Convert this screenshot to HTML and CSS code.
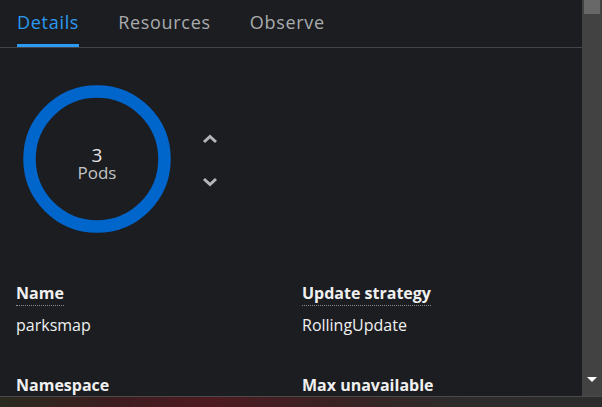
FILE: index.html
```html
<!DOCTYPE html>
<html>
<head>
<meta charset="utf-8">
<link rel="stylesheet" href="styles.css">
</head>
<body>
<div class="window">
  <div class="panel">
    <nav class="tabs">
      <div class="tab active">Details</div>
      <div class="tab">Resources</div>
      <div class="tab">Observe</div>
    </nav>
    <div class="pods">
      <div class="donut">
        <svg width="148" height="148" viewBox="0 0 148 148">
          <circle cx="74" cy="74" r="67.5" fill="none" stroke="#0066cc" stroke-width="12.5"/>
        </svg>
        <div class="donut-label">
          <span class="count">3</span>
          <span class="unit">Pods</span>
        </div>
      </div>
      <div class="scale">
        <svg width="16" height="12" viewBox="0 0 16 12"><path d="M2 9 L8 3.5 L14 9" fill="none" stroke="#b5b6b8" stroke-width="3"/></svg>
        <svg width="16" height="12" viewBox="0 0 16 12"><path d="M2 3 L8 8.5 L14 3" fill="none" stroke="#b5b6b8" stroke-width="3"/></svg>
      </div>
    </div>
    <dl class="details">
      <div class="item">
        <dt><span class="dotted">Name</span></dt>
        <dd>parksmap</dd>
      </div>
      <div class="item">
        <dt><span class="dotted">Update strategy</span></dt>
        <dd>RollingUpdate</dd>
      </div>
      <div class="item">
        <dt>Namespace</dt>
        <dd></dd>
      </div>
      <div class="item">
        <dt>Max unavailable</dt>
        <dd></dd>
      </div>
    </dl>
  </div>
  <div class="scrollbar">
    <div class="thumb"></div>
    <div class="arrow"></div>
  </div>
</div>
<div class="taskbar"></div>
</body>
</html>
```
FILE: styles.css
```css
html, body {
  margin: 0;
  padding: 0;
  width: 602px;
  height: 407px;
  overflow: hidden;
  background: #1b1d21;
  font-family: "Open Sans", "Noto Sans", sans-serif;
}
.window {
  display: flex;
  height: 396px;
}
.panel {
  width: 582px;
  overflow: hidden;
  background: #1b1d21;
}
.tabs {
  display: flex;
  gap: 39px;
  padding-left: 17px;
  height: 47px;
  border-bottom: 1px solid #444548;
  box-sizing: content-box;
}
.tab {
  font-size: 18px;
  letter-spacing: 0.7px;
  color: #a9abad;
  line-height: 20px;
  padding-top: 12px;
  box-sizing: border-box;
  height: 47px;
  border-bottom: 3px solid transparent;
}
.tab.active {
  color: #2b9af3;
  border-bottom-color: #2b9af3;
}
.pods {
  display: flex;
  align-items: center;
  padding: 37px 0 0 23px;
  height: 148px;
}
.donut {
  position: relative;
  width: 148px;
  height: 148px;
}
.donut svg { display: block; }
.donut-label {
  position: absolute;
  inset: 0;
  display: flex;
  flex-direction: column;
  align-items: center;
  justify-content: center;
  padding-top: 9px;
  box-sizing: border-box;
}
.count {
  font-size: 19px;
  line-height: 18px;
  color: #e6e6e6;
}
.unit {
  font-size: 17px;
  line-height: 18px;
  color: #c4c4c4;
}
.scale {
  display: flex;
  flex-direction: column;
  gap: 31px;
  margin-left: 31px;
  margin-top: 2px;
}
.scale svg { display: block; }
.details {
  display: grid;
  grid-template-columns: 286px 1fr;
  margin: 50px 0 0 16px;
  row-gap: 40px;
}
.item dt {
  font-weight: 700;
  font-size: 16px;
  line-height: 20px;
  color: #f0f0f0;
  margin: 0;
}
.dotted {
  display: inline-block;
  border-bottom: 1px dotted #8a8d90;
  padding-bottom: 2px;
}
.item dd {
  margin: 9px 0 0 0;
  font-size: 16px;
  line-height: 20px;
  color: #f0f0f0;
}
.scrollbar {
  width: 20px;
  height: 396px;
  background: #424242;
  display: flex;
  flex-direction: column;
  align-items: center;
  justify-content: space-between;
}
.thumb {
  width: 16px;
  height: 14px;
  background: #686868;
}
.arrow {
  width: 0;
  height: 0;
  border-left: 5px solid transparent;
  border-right: 5px solid transparent;
  border-top: 5px solid #ffffff;
  margin-bottom: 14px;
}
.taskbar {
  height: 11px;
  border-top: 1px solid #4a4a4a;
  box-sizing: border-box;
  background: linear-gradient(90deg, #2a2b20 0%, #3e1c1f 20%, #4e1a22 35%, #3a2222 55%, #2e2b2b 75%, #2c2c2c 100%);
}
```
